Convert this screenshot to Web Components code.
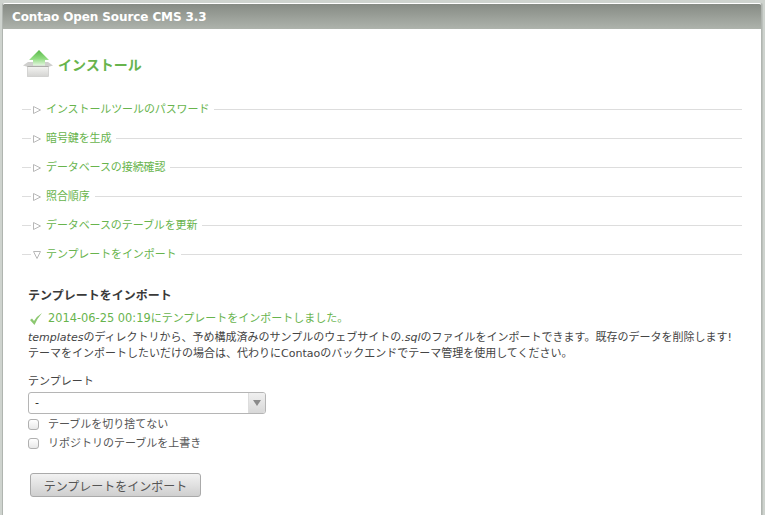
<!DOCTYPE html>
<html lang="ja">
<head>
<meta charset="utf-8">
<style>
  html, body { margin: 0; padding: 0; height: 515px; overflow: hidden; background: #ced3ce; }
  body { font-family: "DejaVu Sans", "Noto Sans CJK JP", sans-serif; font-size: 11px; color: #444; }
</style>
</head>
<body>
<install-card heading="Contao Open Source CMS 3.3">
  <install-title>インストール</install-title>
  <install-section>インストールツールのパスワード</install-section>
  <install-section>暗号鍵を生成</install-section>
  <install-section>データベースの接続確認</install-section>
  <install-section>照合順序</install-section>
  <install-section>データベースのテーブルを更新</install-section>
  <install-section open>テンプレートをインポート</install-section>
  <import-form></import-form>
</install-card>

<script>
  class InstallCard extends HTMLElement {
    constructor() {
      super();
      this.attachShadow({ mode: 'open' });
      this.shadowRoot.innerHTML = `
        <style>
          :host { display: block; margin: 3px 4px 0 3px; height: 512px; background: #fff; border-radius: 2px 2px 0 0; box-shadow: -1px 0 0 #b0b5b0, 1px 0 0 #b0b5b0, 2px 0 0 #bcc1bc; }
          header { height: 26px; box-sizing: border-box; padding: 5px 0 0 9px; background: linear-gradient(#868b84, #aeb3ac); border-top: 1px solid #fff;
            color: #fff; font: bold 12px/17px "DejaVu Sans", Verdana, sans-serif; letter-spacing: -.1px; border-radius: 2px 2px 0 0; }
          main { padding: 0 19px; }
        </style>
        <header>${this.getAttribute('heading')}</header>
        <main><slot></slot></main>`;
    }
  }

  class InstallTitle extends HTMLElement {
    constructor() {
      super();
      this.attachShadow({ mode: 'open' });
      this.shadowRoot.innerHTML = `
        <style>
          :host { display: flex; align-items: flex-start; gap: 5px; height: 32px; margin: 20px 0 0 1px; padding-bottom: 12px;
            color: #68b44d; font: bold 14px/20px "Noto Sans CJK JP", sans-serif; }
          svg { display: block; flex: none; }
          span { margin-top: 5px; }
        </style>
        <svg width="30" height="30" viewBox="0 0 30 30">
          <defs>
            <linearGradient id="g" x1="0" y1="0" x2="0" y2="1"><stop offset="0" stop-color="#58b848"/><stop offset=".55" stop-color="#90dc80"/><stop offset="1" stop-color="#e4f6e0"/></linearGradient>
            <linearGradient id="b" x1="0" y1="0" x2="0" y2="1"><stop offset="0" stop-color="#f4f4f2"/><stop offset="1" stop-color="#d4d4d2"/></linearGradient>
          </defs>
          <path d="M5 13 H25 L30 16.5 L25 18 H5 L0 16.5 Z" fill="#cfcfcd"/>
          <rect x="4.5" y="17.5" width="21" height="10" fill="url(#b)" stroke="#c8c8c6" stroke-width=".7"/>
          <path d="M4.5 17.5 H25.5" stroke="#9c9c9a" stroke-width=".7"/>
          <path d="M16 1 L26 11 H22 V16.5 H10 V11 H6 Z" fill="url(#g)"/>
        </svg>
        <span><slot></slot></span>`;
    }
  }

  class InstallSection extends HTMLElement {
    constructor() {
      super();
      this.attachShadow({ mode: 'open' });
      const arrow = this.hasAttribute('open')
        ? '<path d="M.5 .5 H7.5 L4 7.5 Z"/>'
        : '<path d="M.5 .5 V7.5 L7.5 4 Z"/>';
      this.shadowRoot.innerHTML = `
        <style>
          :host { display: flex; align-items: center; height: 29px; color: #68b44d; font: 11px/16px "Noto Sans CJK JP", sans-serif; letter-spacing: -.1px; }
          i { display: block; height: 1px; margin-top: 4px; background: #ddd; }
          .dash { width: 9px; margin-right: 2px; flex: none; }
          .rest { flex: 1; margin-left: 5px; }
          svg { display: block; flex: none; margin: 4px 5px 0 0; fill: #fff; stroke: #b8b8b8; }
        </style>
        <i class="dash"></i>
        <svg width="8" height="8" viewBox="0 0 8 8">${arrow}</svg>
        <span><slot></slot></span>
        <i class="rest"></i>`;
    }
  }

  class ImportForm extends HTMLElement {
    constructor() {
      super();
      this.attachShadow({ mode: 'open' });
      this.shadowRoot.innerHTML = `
        <style>
          :host { display: block; padding: 19px 0 0 6px; color: #444; font: 11px/16px "DejaVu Sans", "Noto Sans CJK JP", sans-serif; }
          h2 { margin: 0; font: bold 12px/18px "Noto Sans CJK JP", sans-serif; color: #3a3a3a; }
          .ok { display: flex; align-items: center; gap: 6px; margin: 6px 0 0 2px; color: #68b44d; line-height: 17px; }
          .ok svg { display: block; flex: none; }
          .date { font-size: 11.4px; }
          p { margin: 3px 0 0; }
          p em { font-style: italic; }
          .label { margin-top: 12px; }
          .select { display: flex; width: 238px; height: 22px; box-sizing: border-box; margin: 2px 0 1px; border: 1px solid #b5b5b5; border-radius: 3px; background: #fff; }
          .select span { flex: 1; padding-left: 6px; line-height: 20px; color: #222; }
          .select b { display: flex; align-items: center; justify-content: center; width: 16px; border-left: 1px solid #ddd; background: linear-gradient(#f0f0f0, #d8d8d8); border-radius: 0 2px 2px 0; }
          .select b::after { content: ""; border: 4px solid transparent; border-top: 6px solid #8a8a8a; border-bottom: 0; }
          .check { display: flex; align-items: center; gap: 9px; height: 19px; color: #555; }
          .check i { display: block; width: 9px; height: 9px; border: 1px solid #b0b0b0; border-radius: 3px; background: linear-gradient(#fff, #e8e8e8); }
          button { display: block; width: 171px; height: 24px; margin: 20px 0 0 2px; padding: 0; border: 1px solid #aaa; border-radius: 3px; color: #555;
            background: linear-gradient(#f2f2f2, #cfcfcf); font: 12px "Noto Sans CJK JP", sans-serif; }
        </style>
        <h2>テンプレートをインポート</h2>
        <div class="ok">
          <svg width="12" height="12" viewBox="0 0 12 12"><path d="M0 7 L2 5.5 L4 8 Q7 3 12 0 Q7.5 5 4.5 12 Z" fill="#8cc870"/></svg>
          <span><span class="date">2014-06-25 00:19</span>にテンプレートをインポートしました。</span>
        </div>
        <p><em>templates</em>のディレクトリから、予め構成済みのサンプルのウェブサイトの<em>.sql</em>のファイルをインポートできます。既存のデータを削除します!<br>
        テーマをインポートしたいだけの場合は、代わりにContaoのバックエンドでテーマ管理を使用してください。</p>
        <div class="label">テンプレート</div>
        <div class="select"><span>-</span><b></b></div>
        <div class="check"><i></i>テーブルを切り捨てない</div>
        <div class="check"><i></i>リポジトリのテーブルを上書き</div>
        <button>テンプレートをインポート</button>`;
    }
  }

  customElements.define('install-card', InstallCard);
  customElements.define('install-title', InstallTitle);
  customElements.define('install-section', InstallSection);
  customElements.define('import-form', ImportForm);
</script>
</body>
</html>
